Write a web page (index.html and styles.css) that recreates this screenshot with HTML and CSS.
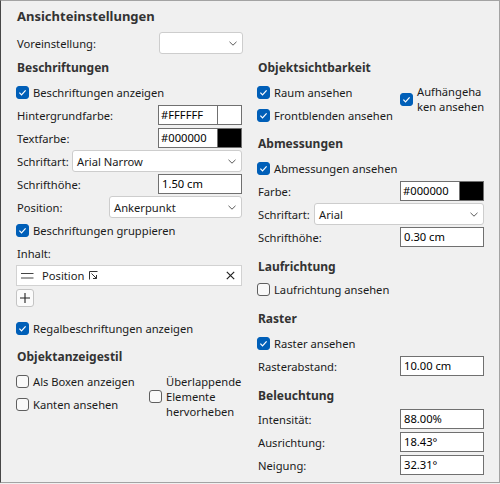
FILE: index.html
```html
<!DOCTYPE html>
<html lang="de">
<head>
<meta charset="utf-8">
<link rel="stylesheet" href="styles.css">
</head>
<body>
<div class="panel">
  <div class="title">Ansichteinstellungen</div>
  <div class="row preset">
    <span>Voreinstellung:</span>
    <div class="select w84"><span class="val"></span><svg class="chev" width="8" height="5" viewBox="0 0 8 5"><path d="M0.5 0.8 L4 4.2 L7.5 0.8" fill="none" stroke="#5a5a5a" stroke-width="1"/></svg></div>
  </div>
  <div class="cols">
    <div class="col">
      <div class="head">Beschriftungen</div>
      <label class="check on mt3"><span class="box"><svg width="13" height="13" viewBox="0 0 13 13"><path d="M3.4 6.7 L5.5 8.8 L9.6 4.3" fill="none" stroke="#fff" stroke-width="1.2"/></svg></span>Beschriftungen anzeigen</label>
      <div class="row mt1"><span>Hintergrundfarbe:</span><div class="color"><span class="ctext">#FFFFFF</span><span class="swatch white"></span></div></div>
      <div class="row mt1"><span>Textfarbe:</span><div class="color"><span class="ctext">#000000</span><span class="swatch black"></span></div></div>
      <div class="row mt1"><span>Schriftart:</span><div class="select w170"><span class="val">Arial Narrow</span><svg class="chev" width="8" height="5" viewBox="0 0 8 5"><path d="M0.5 0.8 L4 4.2 L7.5 0.8" fill="none" stroke="#5a5a5a" stroke-width="1"/></svg></div></div>
      <div class="row mt1"><span>Schrifthöhe:</span><div class="input w84">1.50 cm</div></div>
      <div class="row mt1"><span>Position:</span><div class="select w133"><span class="val">Ankerpunkt</span><svg class="chev" width="8" height="5" viewBox="0 0 8 5"><path d="M0.5 0.8 L4 4.2 L7.5 0.8" fill="none" stroke="#5a5a5a" stroke-width="1"/></svg></div></div>
      <label class="check on mt1"><span class="box"><svg width="13" height="13" viewBox="0 0 13 13"><path d="M3.4 6.7 L5.5 8.8 L9.6 4.3" fill="none" stroke="#fff" stroke-width="1.2"/></svg></span>Beschriftungen gruppieren</label>
      <div class="row mt1"><span>Inhalt:</span></div>
      <div class="listitem">
        <svg class="handle" width="13" height="7" viewBox="0 0 13 7"><path d="M0 1.5 H12.5 M0 6 H12.5" stroke="#444" stroke-width="1"/></svg>
        <span class="litext">Position</span>
        <svg class="jump" width="9" height="9" viewBox="0 0 9 9"><path d="M0.5 8.5 V0.5 H8.5" fill="none" stroke="#333" stroke-width="1"/><path d="M2.5 2.5 L7.5 7.5 M7.5 4 V7.5 H4" fill="none" stroke="#333" stroke-width="1"/></svg>
        <svg class="close" width="9" height="9" viewBox="0 0 9 9"><path d="M0.8 0.8 L8.2 8.2 M8.2 0.8 L0.8 8.2" stroke="#222" stroke-width="1.2"/></svg>
      </div>
      <div class="plus"><svg width="12" height="12" viewBox="0 0 12 12"><path d="M6 1 V11 M1 6 H11" stroke="#222" stroke-width="1.1"/></svg></div>
      <label class="check on mt10"><span class="box"><svg width="13" height="13" viewBox="0 0 13 13"><path d="M3.4 6.7 L5.5 8.8 L9.6 4.3" fill="none" stroke="#fff" stroke-width="1.2"/></svg></span>Regalbeschriftungen anzeigen</label>
      <div class="head mt8">Objektanzeigestil</div>
      <div class="style-grid">
        <div class="stack">
          <label class="check"><span class="box"></span>Als Boxen anzeigen</label>
          <label class="check mt1"><span class="box"></span>Kanten ansehen</label>
        </div>
        <label class="check multi top4"><span class="box"></span><span class="mtext">Überlappende<br>Elemente<br>hervorheben</span></label>
      </div>
    </div>
    <div class="col">
      <div class="head">Objektsichtbarkeit</div>
      <div class="vis-grid">
        <div class="stack">
          <label class="check on"><span class="box"><svg width="13" height="13" viewBox="0 0 13 13"><path d="M3.4 6.7 L5.5 8.8 L9.6 4.3" fill="none" stroke="#fff" stroke-width="1.2"/></svg></span>Raum ansehen</label>
          <label class="check on mt1"><span class="box"><svg width="13" height="13" viewBox="0 0 13 13"><path d="M3.4 6.7 L5.5 8.8 L9.6 4.3" fill="none" stroke="#fff" stroke-width="1.2"/></svg></span>Frontblenden ansehen</label>
        </div>
        <label class="check on multi top3"><span class="box"><svg width="13" height="13" viewBox="0 0 13 13"><path d="M3.4 6.7 L5.5 8.8 L9.6 4.3" fill="none" stroke="#fff" stroke-width="1.2"/></svg></span><span class="mtext">Aufhängeha<br>ken ansehen</span></label>
      </div>
      <div class="head mt8">Abmessungen</div>
      <label class="check on mt3"><span class="box"><svg width="13" height="13" viewBox="0 0 13 13"><path d="M3.4 6.7 L5.5 8.8 L9.6 4.3" fill="none" stroke="#fff" stroke-width="1.2"/></svg></span>Abmessungen ansehen</label>
      <div class="row mt1"><span>Farbe:</span><div class="color"><span class="ctext">#000000</span><span class="swatch black"></span></div></div>
      <div class="row mt1"><span>Schriftart:</span><div class="select w170"><span class="val">Arial</span><svg class="chev" width="8" height="5" viewBox="0 0 8 5"><path d="M0.5 0.8 L4 4.2 L7.5 0.8" fill="none" stroke="#5a5a5a" stroke-width="1"/></svg></div></div>
      <div class="row mt1"><span>Schrifthöhe:</span><div class="input w84">0.30 cm</div></div>
      <div class="head mt9">Laufrichtung</div>
      <label class="check mt1"><span class="box"></span>Laufrichtung ansehen</label>
      <div class="head mt9">Raster</div>
      <label class="check on mt3"><span class="box"><svg width="13" height="13" viewBox="0 0 13 13"><path d="M3.4 6.7 L5.5 8.8 L9.6 4.3" fill="none" stroke="#fff" stroke-width="1.2"/></svg></span>Raster ansehen</label>
      <div class="row mt1"><span>Rasterabstand:</span><div class="input w84">10.00 cm</div></div>
      <div class="head mt9">Beleuchtung</div>
      <div class="row mt2"><span>Intensität:</span><div class="input w84">88.00%</div></div>
      <div class="row mt1"><span>Ausrichtung:</span><div class="input w84">18.43°</div></div>
      <div class="row mt1"><span>Neigung:</span><div class="input w84">32.31°</div></div>
    </div>
  </div>
</div>
</body>
</html>
```

FILE: styles.css
```css
* { box-sizing: border-box; margin: 0; padding: 0; }
html, body { background: #f0f0f0; }
body {
  font-family: "Noto Sans", "Open Sans", sans-serif;
  font-size: 11.2px;
  color: #1a1a1a;
}
.panel {
  width: 500px;
  height: 483px;
  border: 1px solid #a3a3a3;
  border-left-color: #474747;
  padding: 5px 15px 0 15px;
  background: #f0f0f0;
}
.title {
  font-size: 13px;
  font-weight: 700;
  color: #333;
  height: 20px;
  line-height: 20px;
  padding-left: 1px;
}
.row {
  display: flex;
  align-items: center;
  justify-content: space-between;
  height: 22px;
  padding-left: 1px;
}
.preset { margin-top: 6px; width: 227px; }
.cols {
  display: grid;
  grid-template-columns: 226px 227px;
  column-gap: 15px;
}
.head {
  font-size: 12px;
  font-weight: 700;
  color: #333;
  height: 20px;
  line-height: 20px;
  margin-top: 4px;
  padding-left: 1px;
}
.mt1 { margin-top: 1px; }
.mt2 { margin-top: 2px; }
.mt3 { margin-top: 3px; }
.mt8 { margin-top: 8px; }
.mt9 { margin-top: 9px; }
.mt10 { margin-top: 10px; }

.check {
  display: flex;
  align-items: center;
  gap: 4px;
  height: 22px;
  white-space: nowrap;
}
.box {
  width: 13px;
  height: 13px;
  flex: none;
  border: 1px solid #5f5f5f;
  border-radius: 3px;
  background: #f9f9f9;
  display: flex;
}
.check.on .box {
  background: #005fb8;
  border-color: #005fb8;
}
.check.on .box svg { margin: -1px; }

.select {
  height: 22px;
  background: #fff;
  border: 1px solid #cdcdcd;
  border-radius: 3px;
  display: flex;
  align-items: center;
  justify-content: space-between;
  padding: 0 5px 0 4px;
}
.select .val { color: #1a1a1a; }
.chev { flex: none; }
.w84 { width: 84px; }
.w133 { width: 133px; }
.w170 { width: 170px; }
.input {
  height: 20px;
  background: #fff;
  border: 1px solid #707070;
  padding-left: 3px;
  line-height: 18px;
  color: #000;
}
.color {
  width: 84px;
  height: 20px;
  background: #fff;
  border: 1px solid #707070;
  display: flex;
}
.ctext {
  width: 58px;
  padding-left: 2px;
  line-height: 18px;
  color: #000;
}
.swatch {
  flex: 1;
  border-left: 1px solid #707070;
}
.swatch.white { background: #fff; }
.swatch.black { background: #000; }

.listitem {
  margin-top: 1px;
  height: 21px;
  background: #fff;
  border: 1px solid #d2d2d2;
  display: flex;
  align-items: center;
  padding-left: 4px;
  padding-right: 6px;
}
.handle { flex: none; }
.litext { margin-left: 8px; }
.jump { margin-left: 5px; flex: none; }
.close { margin-left: auto; flex: none; }
.plus {
  margin-top: 3px;
  width: 18px;
  height: 18px;
  background: #fbfbfb;
  border: 1px solid #c4c4c4;
  border-radius: 3px;
  display: flex;
  align-items: center;
  justify-content: center;
}

.style-grid {
  margin-top: 3px;
  display: grid;
  grid-template-columns: 133px 1fr;
}
.vis-grid {
  margin-top: 3px;
  display: grid;
  grid-template-columns: 143px 1fr;
}
.stack { display: flex; flex-direction: column; }
.check.multi {
  height: auto;
  align-self: start;
}
.top4 { margin-top: 4px; }
.top3 { margin-top: 3px; }
.mtext { line-height: 15px; white-space: nowrap; }
```
